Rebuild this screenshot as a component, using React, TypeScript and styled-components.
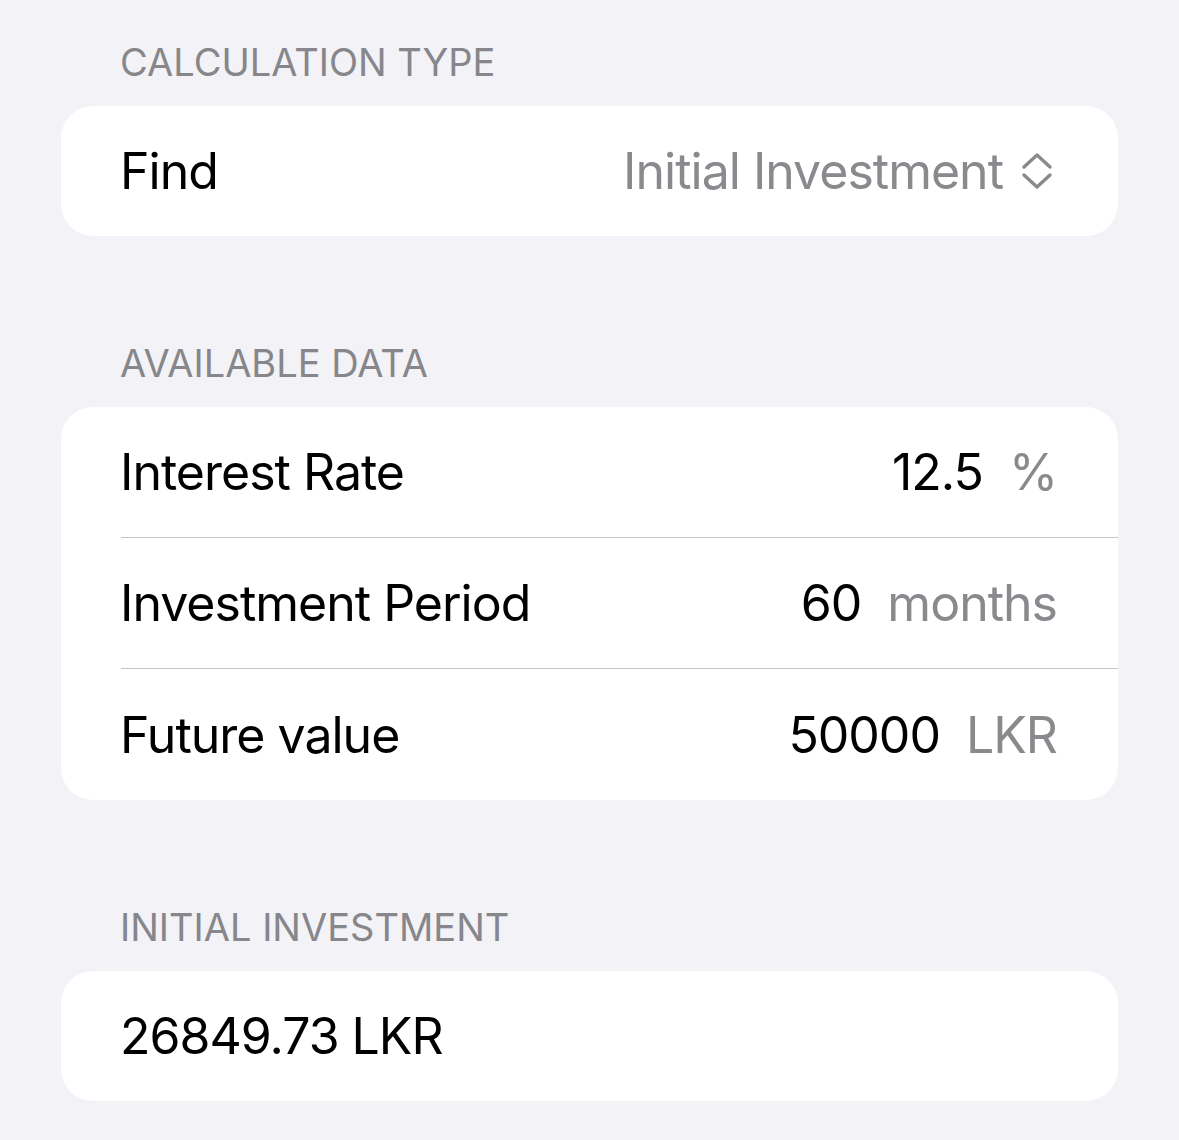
import styled, { createGlobalStyle } from "styled-components";

const GlobalStyle = createGlobalStyle`
  html, body {
    margin: 0;
    padding: 0;
    background: #f2f2f7;
  }
  body {
    font-family: Inter, "Noto Sans", "Liberation Sans", sans-serif;
    -webkit-font-smoothing: antialiased;
  }
`;

interface Field {
  id: number;
  label: string;
  value: string;
  unit: string;
}

const fields: Field[] = [
  { id: 1, label: "Interest Rate", value: "12.5", unit: "%" },
  { id: 2, label: "Investment Period", value: "60", unit: "months" },
  { id: 3, label: "Future value", value: "50000", unit: "LKR" },
];

function UpDownChevron() {
  return (
    <svg width='32' height='38' viewBox='0 0 32 38' fill='none'>
      <path
        d='M3 15 L16 3 L29 15 M3 23 L16 35 L29 23'
        stroke='#8a8a8e'
        strokeWidth='3.4'
        strokeLinecap='round'
        strokeLinejoin='round'
      />
    </svg>
  );
}

type RowKind = "single" | "middle" | "last";

function App() {
  const kindOf = (i: number): RowKind =>
    i === fields.length - 1 ? "last" : "middle";

  return (
    <>
      <GlobalStyle />
      <Page>
        <Section>
          <Header>Calculation Type</Header>
          <Card>
            <Row>
              <RowInner kind='single'>
                <Label>Find</Label>
                <Picker>
                  <span>Initial Investment</span>
                  <UpDownChevron />
                </Picker>
              </RowInner>
            </Row>
          </Card>
        </Section>

        <Section>
          <Header>Available Data</Header>
          <Card>
            {fields.map((field, i) => (
              <Row key={field.id}>
                <RowInner kind={kindOf(i)}>
                  <Label>{field.label}</Label>
                  <ValueGroup>
                    <Value>{field.value}</Value>
                    <Unit>{field.unit}</Unit>
                  </ValueGroup>
                </RowInner>
              </Row>
            ))}
          </Card>
        </Section>

        <Section>
          <Header>Initial Investment</Header>
          <Card>
            <Row>
              <RowInner kind='single'>
                <Label>26849.73 LKR</Label>
              </RowInner>
            </Row>
          </Card>
        </Section>
      </Page>
    </>
  );
}

const rowHeights: Record<RowKind, string> = {
  single: "130px",
  middle: "130px",
  last: "131px",
};

const Page = styled.div`
  display: flex;
  flex-direction: column;
  gap: 104px;
  padding: 39px 61px 38px;
`;

const Section = styled.section`
  display: flex;
  flex-direction: column;
  gap: 20px;
`;

const Header = styled.h2`
  margin: 0;
  padding-left: 59px;
  font-size: 38px;
  line-height: 47px;
  font-weight: 400;
  text-transform: uppercase;
  letter-spacing: 0;
  color: #86868b;
`;

const Card = styled.div`
  display: flex;
  flex-direction: column;
  background: #ffffff;
  border-radius: 32px;
  overflow: hidden;
`;

const Row = styled.div`
  display: flex;
  padding-left: 60px;
`;

const RowInner = styled.div<{ kind: RowKind }>`
  flex: 1;
  display: flex;
  align-items: center;
  justify-content: space-between;
  height: ${(p) => rowHeights[p.kind]};
  padding-right: 61px;
  border-bottom: ${(p) =>
    p.kind === "middle" ? "1.5px solid #c6c6c8" : "none"};
`;

const Label = styled.span`
  margin-left: -1px;
  font-size: 50px;
  letter-spacing: -1px;
  color: #000000;
`;

const Picker = styled.div`
  display: flex;
  align-items: center;
  gap: 18px;
  margin-right: 4px;
  font-size: 50px;
  letter-spacing: -1px;
  color: #8a8a8e;
`;

const ValueGroup = styled.div`
  display: flex;
  align-items: center;
  gap: 26px;
  font-size: 50px;
  letter-spacing: -1px;
`;

const Value = styled.span`
  color: #000000;
`;

const Unit = styled.span`
  color: #8a8a8e;
`;

export default App;
